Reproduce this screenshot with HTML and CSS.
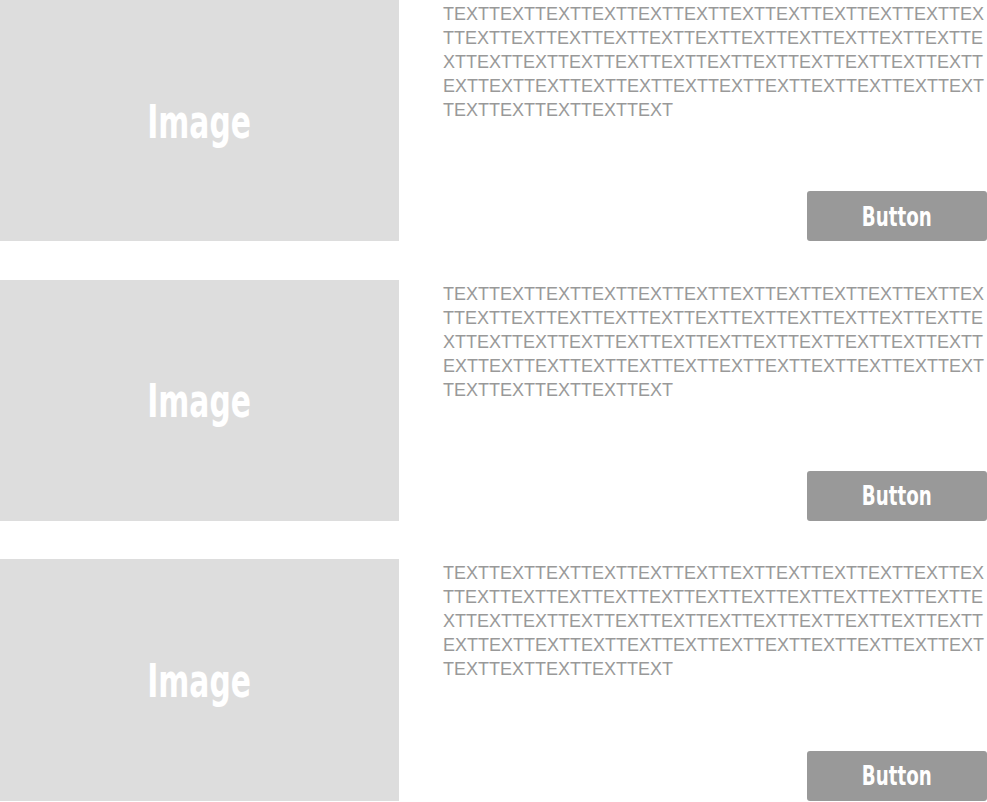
FILE: index.html
```html
<!DOCTYPE html>
<html lang="en">
<head>
<meta charset="utf-8">
<title>List</title>
<link rel="stylesheet" href="styles.css">
</head>
<body>
<div class="list">
  <div class="row">
    <div class="thumb"><span class="thumb-label">Image</span></div>
    <div class="body">
      <p class="text">TEXTTEXTTEXTTEXTTEXTTEXTTEXTTEXTTEXTTEXTTEXTTEXTTEXTTEXTTEXTTEXTTEXTTEXTTEXTTEXTTEXTTEXTTEXTTEXTTEXTTEXTTEXTTEXTTEXTTEXTTEXTTEXTTEXTTEXTTEXTTEXTTEXTTEXTTEXTTEXTTEXTTEXTTEXTTEXTTEXTTEXTTEXTTEXTTEXTTEXTTEXTTEXT</p>
      <a class="btn" href="#"><span class="btn-label">Button</span></a>
    </div>
  </div>
  <div class="row">
    <div class="thumb"><span class="thumb-label">Image</span></div>
    <div class="body">
      <p class="text">TEXTTEXTTEXTTEXTTEXTTEXTTEXTTEXTTEXTTEXTTEXTTEXTTEXTTEXTTEXTTEXTTEXTTEXTTEXTTEXTTEXTTEXTTEXTTEXTTEXTTEXTTEXTTEXTTEXTTEXTTEXTTEXTTEXTTEXTTEXTTEXTTEXTTEXTTEXTTEXTTEXTTEXTTEXTTEXTTEXTTEXTTEXTTEXTTEXTTEXTTEXTTEXT</p>
      <a class="btn" href="#"><span class="btn-label">Button</span></a>
    </div>
  </div>
  <div class="row">
    <div class="thumb"><span class="thumb-label">Image</span></div>
    <div class="body">
      <p class="text">TEXTTEXTTEXTTEXTTEXTTEXTTEXTTEXTTEXTTEXTTEXTTEXTTEXTTEXTTEXTTEXTTEXTTEXTTEXTTEXTTEXTTEXTTEXTTEXTTEXTTEXTTEXTTEXTTEXTTEXTTEXTTEXTTEXTTEXTTEXTTEXTTEXTTEXTTEXTTEXTTEXTTEXTTEXTTEXTTEXTTEXTTEXTTEXTTEXTTEXTTEXTTEXT</p>
      <a class="btn" href="#"><span class="btn-label">Button</span></a>
    </div>
  </div>
</div>
</body>
</html>
```

FILE: styles.css
```css
html, body {
  margin: 0;
  padding: 0;
  background: #ffffff;
}

.list {
  width: 987px;
  display: flex;
  flex-direction: column;
  gap: 38.4px;
}

.row {
  display: flex;
  gap: 44px;
  height: 241.3px;
}

.thumb {
  flex: 0 0 399px;
  background: #dddddd;
  display: flex;
  align-items: center;
  justify-content: center;
}

.thumb-label {
  display: inline-block;
  font-family: "DejaVu Sans Condensed", "DejaVu Sans", sans-serif;
  font-weight: 700;
  font-size: 46px;
  letter-spacing: 0;
  color: #ffffff;
  line-height: 1;
  padding-top: 2px;
  transform: scaleX(0.72);
}

.body {
  flex: 1 1 auto;
  min-width: 0;
  display: flex;
  flex-direction: column;
  justify-content: space-between;
  align-items: flex-end;
}

.text {
  margin: 0;
  padding-top: 2px;
  align-self: stretch;
  font-family: "Liberation Sans", Arial, sans-serif;
  font-size: 18px;
  line-height: 24px;
  color: #999999;
  word-break: break-all;
}

.btn {
  width: 180px;
  height: 50px;
  border-radius: 3px;
  background: #999999;
  color: #ffffff;
  text-decoration: none;
  display: flex;
  align-items: center;
  justify-content: center;
}

.btn-label {
  display: inline-block;
  font-family: "DejaVu Sans Condensed", "DejaVu Sans", sans-serif;
  font-weight: 700;
  font-size: 26px;
  line-height: 1;
  padding-top: 1px;
  transform: scaleX(0.78);
}
```
